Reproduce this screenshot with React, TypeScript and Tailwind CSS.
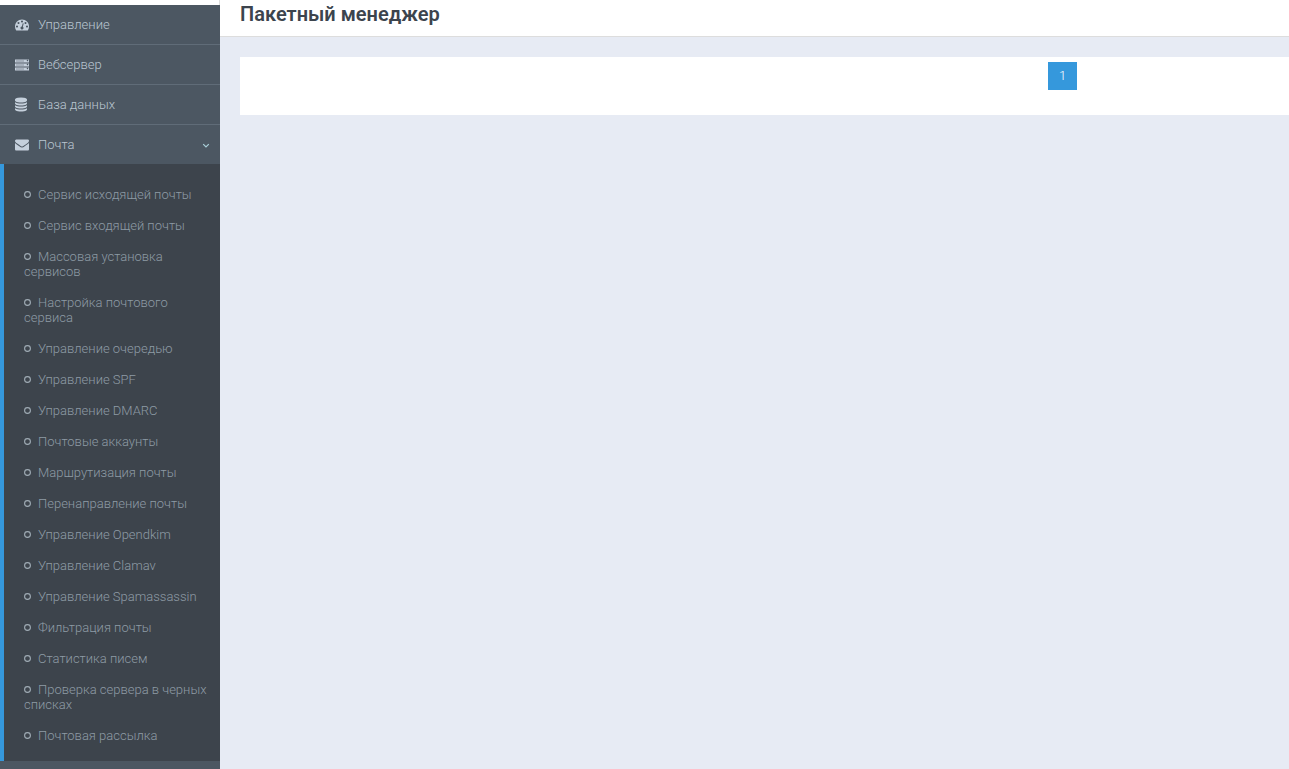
import type { ReactNode } from "react";

const icons = {
    dashboard: {
        box: "0 64 1792 1792",
        d: "M384 1152q0-53-37.5-90.5t-90.5-37.5-90.5 37.5-37.5 90.5 37.5 90.5 90.5 37.5 90.5-37.5 37.5-90.5zm192-448q0-53-37.5-90.5t-90.5-37.5-90.5 37.5-37.5 90.5 37.5 90.5 90.5 37.5 90.5-37.5 37.5-90.5zm428 481l101-382q6-26-7.5-48.5t-38.5-29.5-48 6.5-30 39.5l-101 382q-60 5-107 43.5t-63 98.5q-20 77 20 146t117 89 146-20 89-117q16-60-6-117t-72-91zm660-33q0-53-37.5-90.5t-90.5-37.5-90.5 37.5-37.5 90.5 37.5 90.5 90.5 37.5 90.5-37.5 37.5-90.5zm-640-640q0-53-37.5-90.5t-90.5-37.5-90.5 37.5-37.5 90.5 37.5 90.5 90.5 37.5 90.5-37.5 37.5-90.5zm448 192q0-53-37.5-90.5t-90.5-37.5-90.5 37.5-37.5 90.5 37.5 90.5 90.5 37.5 90.5-37.5 37.5-90.5zm320 448q0 261-141 483-19 29-54 29h-1402q-35 0-54-29-141-221-141-483 0-182 71-348t191-286 286-191 348-71 348 71 286 191 191 286 71 348z",
    },
    server: {
        box: "0 0 1792 1792",
        d: "M128 1440h1024v-64h-1024v64zm0-512h1024v-64h-1024v64zm1568 416q0-40-28-68t-68-28-68 28-28 68 28 68 68 28 68-28 28-68zm-1568-928h1024v-64h-1024v64zm1568 416q0-40-28-68t-68-28-68 28-28 68 28 68 68 28 68-28 28-68zm0-512q0-40-28-68t-68-28-68 28-28 68 28 68 68 28 68-28 28-68zm96 896v384h-1792v-384h1792zm0-512v384h-1792v-384h1792zm0-512v384h-1792v-384h1792z",
    },
    database: {
        box: "0 64 1792 1792",
        d: "M768 768q237 0 443-43t325-127v170q0 69-103 128t-280 93.5-385 34.5-385-34.5-280-93.5-103-128v-170q119 84 325 127t443 43zm0 768q237 0 443-43t325-127v170q0 69-103 128t-280 93.5-385 34.5-385-34.5-280-93.5-103-128v-170q119 84 325 127t443 43zm0-384q237 0 443-43t325-127v170q0 69-103 128t-280 93.5-385 34.5-385-34.5-280-93.5-103-128v-170q119 84 325 127t443 43zm0-1152q208 0 385 34.5t280 93.5 103 128v128q0 69-103 128t-280 93.5-385 34.5-385-34.5-280-93.5-103-128v-128q0-69 103-128t280-93.5 385-34.5z",
    },
    envelope: {
        box: "0 64 1792 1792",
        d: "M1792 710v794q0 66-47 113t-113 47h-1472q-66 0-113-47t-47-113v-794q44 49 101 87 362 246 497 345 57 42 92.5 65.5t94.5 48 110 24.5h2q51 0 110-24.5t94.5-48 92.5-65.5q170-123 498-345 57-39 100-87zm0-294q0 79-49 151t-122 123q-376 261-468 325-10 7-42.5 31t-54 38.5-52 32.5-57.5 27-50 9h-2q-23 0-50-9t-57.5-27-52-32.5-54-38.5-42.5-31q-91-64-262-182.5t-205-142.5q-62-42-117-115.5t-55-136.5q0-78 41.5-130t118.5-52h1472q65 0 112.5 47t47.5 113z",
    },
};

type IconName = keyof typeof icons;

const sections: { title: string; icon: IconName }[] = [
    { title: "Управление", icon: "dashboard" },
    { title: "Вебсервер", icon: "server" },
    { title: "База данных", icon: "database" },
];

const mailLinks = [
    "Сервис исходящей почты",
    "Сервис входящей почты",
    "Массовая установка сервисов",
    "Настройка почтового сервиса",
    "Управление очередью",
    "Управление SPF",
    "Управление DMARC",
    "Почтовые аккаунты",
    "Маршрутизация почты",
    "Перенаправление почты",
    "Управление Opendkim",
    "Управление Clamav",
    "Управление Spamassassin",
    "Фильтрация почты",
    "Статистика писем",
    "Проверка сервера в черных списках",
    "Почтовая рассылка",
];

function MenuLink({ title, icon, children }: { title: string; icon: IconName; children?: ReactNode }) {
    return (
        <a href="#" className="flex h-full items-center pl-[15px] pr-[10px] text-[#bac6d1] hover:text-white">
            <svg viewBox={icons[icon].box} className="mr-[9px] size-[14px] overflow-visible fill-[#c5d0dc]" aria-hidden="true">
                <path d={icons[icon].d} />
            </svg>
            <span className="flex-1">{title}</span>
            {children}
        </a>
    );
}

function Sidebar() {
    return (
        <aside className="w-[220px] shrink-0 bg-[#4c5762] text-[13px] font-light">
            <div className="h-[5px] border-r border-[#dddddd] bg-white" />
            <nav>
                <ul>
                    {sections.map((s) => (
                        <li key={s.title} className="h-10 border-b border-[#606c78]">
                            <MenuLink title={s.title} icon={s.icon} />
                        </li>
                    ))}
                    <li>
                        <div className="h-[39px]">
                            <MenuLink title="Почта" icon="envelope">
                                <svg viewBox="0 0 8 6" className="mt-[3px] h-[6px] w-2 fill-none stroke-[#a9cfd8]" aria-hidden="true">
                                    <path d="M1.2 1.2L4 4L6.8 1.2" strokeWidth="1.2" />
                                </svg>
                            </MenuLink>
                        </div>
                        <ul className="border-l-4 border-[#3598dc] bg-[#3d444c] pt-[15px] pb-[10px]">
                            {mailLinks.map((title) => (
                                <li key={title}>
                                    <a href="#" className="block py-2 pl-5 pr-[10px] leading-[15px] text-[#8e9ba5] hover:text-white">
                                        <svg viewBox="0 0 7 8" className="mr-[7px] inline-block h-2 w-[7px] align-baseline" aria-hidden="true">
                                            <circle cx="3.5" cy="3.5" r="2.9" strokeWidth="1.1" className="fill-none stroke-[#a0acb5]" />
                                        </svg>
                                        {title}
                                    </a>
                                </li>
                            ))}
                        </ul>
                    </li>
                </ul>
            </nav>
        </aside>
    );
}

export default function App() {
    return (
        <div className="flex h-screen overflow-hidden bg-[#e7ebf4] font-[Roboto,sans-serif]">
            <Sidebar />
            <main className="min-w-0 flex-1">
                <header className="border-b border-[#dddddd] bg-white px-5 pt-[2px] pb-[10px]">
                    <h1 className="text-[20px] leading-6 font-semibold text-[#3c444d]">Пакетный менеджер</h1>
                </header>
                <div className="pt-5 pl-5">
                    <div className="flex h-[58px] justify-end bg-white pt-[5px] pr-[212px]">
                        <button type="button" className="h-7 w-[29px] bg-[#3598dc] text-[13px] font-light text-white">
                            1
                        </button>
                    </div>
                </div>
            </main>
        </div>
    );
}
